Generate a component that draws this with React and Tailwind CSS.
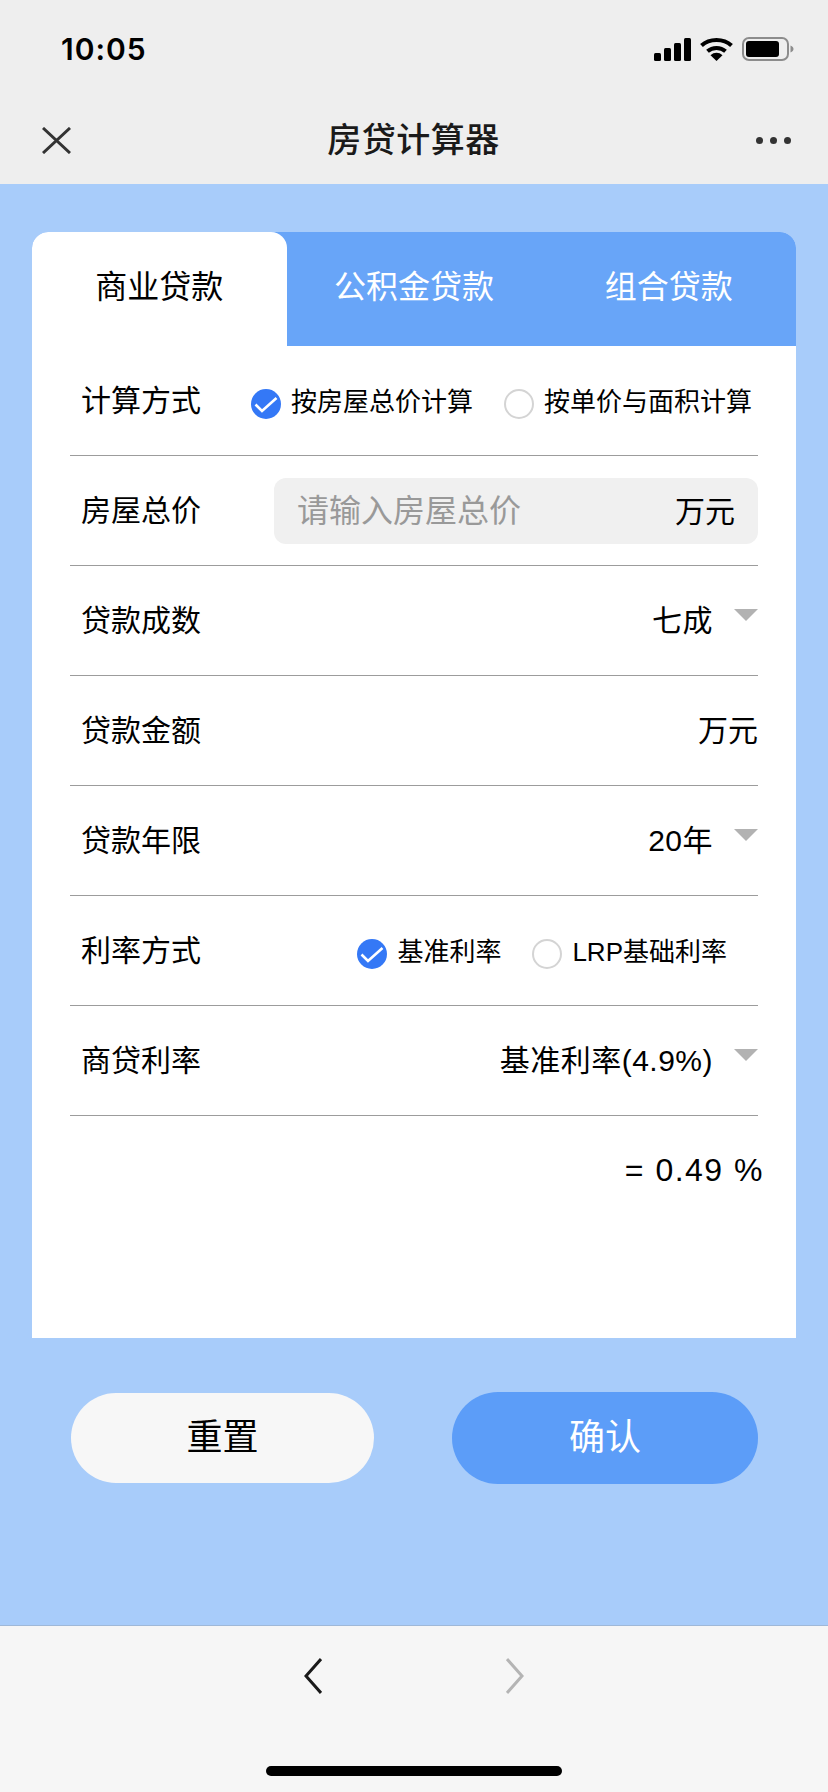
const font = { fontFamily: '"Liberation Sans", "Noto Sans CJK SC", sans-serif' };

const Radio = ({ checked, label }) => (
  <div className="flex items-center gap-[10px]">
    {checked ? (
      <svg width="30" height="30" viewBox="0 0 30 30" className="mt-[4px]">
        <circle cx="15" cy="15" r="15" fill="#3478f6" />
        <path d="M4.5 15.5L11 22 25.5 9" fill="none" stroke="#fff" strokeWidth="2.6" />
      </svg>
    ) : (
      <span className="w-[30px] h-[30px] mt-[4px] rounded-full border-2 border-[#d4d4d4] bg-white" />
    )}
    <span className="text-[26px] leading-[30px] text-black">{label}</span>
  </div>
);

const Arrow = () => (
  <svg width="24" height="12" viewBox="0 0 24 12" className="ml-[21px] mb-3">
    <path d="M0 0h24L12 12z" fill="#b2b2b2" />
  </svg>
);

const Row = ({ label, children }) => (
  <div className="h-[110px] mx-[38px] border-b border-[#9c9c9c] flex items-center justify-between pl-[11px]">
    <span className="text-[30px] leading-[40px] text-black">{label}</span>
    {children}
  </div>
);

const Select = ({ value }) => (
  <div className="flex items-center">
    <span className="text-[30px] leading-[40px] text-black tracking-[0.5px]">{value}</span>
    <Arrow />
  </div>
);

export default function App() {
  return (
    <div className="w-[828px] h-[1792px] flex flex-col bg-[#a8ccfa]" style={font}>
      {/* status + nav */}
      <div className="bg-[#eeeeee] h-[184px] shrink-0">
        <div className="h-[88px] flex items-center justify-between pl-[61px] pr-[34px] pt-[10px]">
          <span className="text-[30px] leading-[36px] font-semibold text-black tracking-[1px]" style={{ fontFamily: 'Inter, sans-serif' }}>10:05</span>
          <div className="flex items-center gap-[9px]">
            <svg width="37" height="23" viewBox="0 0 37 23">
              <rect x="0" y="15" width="7" height="8" rx="1.5" />
              <rect x="10" y="10" width="7" height="13" rx="1.5" />
              <rect x="20" y="5" width="7" height="18" rx="1.5" />
              <rect x="30" y="0" width="7" height="23" rx="1.5" />
            </svg>
            <svg width="33" height="24" viewBox="0 0 33 24">
              <path d="M1.5 8.5C9.5 1 23.5 1 31.5 8.5" fill="none" stroke="#000" strokeWidth="4" />
              <path d="M7.5 14.2C12.5 9.8 20.5 9.8 25.5 14.2" fill="none" stroke="#000" strokeWidth="4" />
              <path d="M10.5 18.3C14 15 19 15 22.5 18.3L16.5 24z" />
            </svg>
            <svg width="52" height="24" viewBox="0 0 52 24">
              <rect x="1" y="1" width="45" height="22" rx="6" fill="none" stroke="#8c8c8c" strokeWidth="2" />
              <rect x="4" y="4" width="33" height="16" rx="3" />
              <path d="M48.5 8.5c2 .8 3 2 3 3.5s-1 2.7-3 3.5z" fill="#8c8c8c" />
            </svg>
          </div>
        </div>
        <div className="h-[96px] flex items-center justify-between pl-[42px] pr-[37px] pt-[8px]">
          <svg width="29" height="27" viewBox="0 0 29 27">
            <path d="M1 1l27 25M28 1L1 26" fill="none" stroke="#333" strokeWidth="3" />
          </svg>
          <span className="text-[34px] leading-[44px] font-medium text-[#1a1a1a] tracking-[0.5px]">房贷计算器</span>
          <div className="flex gap-[7px]">
            <span className="w-[7px] h-[7px] rounded-full bg-[#333]" />
            <span className="w-[7px] h-[7px] rounded-full bg-[#333]" />
            <span className="w-[7px] h-[7px] rounded-full bg-[#333]" />
          </div>
        </div>
      </div>

      {/* main */}
      <div className="flex-1 px-[32px] pt-[48px]">
        <div className="bg-white h-[1106px] rounded-t-[16px] overflow-hidden">
          <div className="grid grid-cols-3 h-[114px] bg-[#68a5f8] text-[32px] text-white">
            <div className="bg-white text-black rounded-t-[16px] flex items-center justify-center pb-[5px]">商业贷款</div>
            <div className="flex items-center justify-center pb-[5px]">公积金贷款</div>
            <div className="flex items-center justify-center pb-[5px]">组合贷款</div>
          </div>

          <Row label="计算方式">
            <div className="flex items-center gap-[31px] pr-[6px] mt-[3px]">
              <Radio checked label="按房屋总价计算" />
              <Radio label="按单价与面积计算" />
            </div>
          </Row>
          <Row label="房屋总价">
            <div className="w-[484px] h-[66px] mt-[1px] rounded-[12px] bg-[#f0f0f0] flex items-center justify-between pl-[23px] pr-[23px]">
              <span className="text-[32px] text-[#999999]">请输入房屋总价</span>
              <span className="text-[30px] text-black">万元</span>
            </div>
          </Row>
          <Row label="贷款成数"><Select value="七成" /></Row>
          <Row label="贷款金额"><span className="text-[30px] leading-[40px] text-black">万元</span></Row>
          <Row label="贷款年限"><Select value="20年" /></Row>
          <Row label="利率方式">
            <div className="flex items-center gap-[31px] pr-[31px] mt-[3px]">
              <Radio checked label="基准利率" />
              <Radio label="LRP基础利率" />
            </div>
          </Row>
          <Row label="商贷利率"><Select value="基准利率(4.9%)" /></Row>

          <div className="flex justify-end pr-[32px] pt-[34px] text-[32px] leading-[40px] text-black tracking-[1.5px]">
            <span className="whitespace-pre">= 0.49 %</span>
          </div>
        </div>

        <div className="flex items-center justify-between pl-[39px] pr-[38px] mt-[54px]">
          <button className="w-[303px] h-[90px] rounded-[45px] bg-[#f7f7f7] text-[36px] text-black">重置</button>
          <button className="w-[306px] h-[92px] rounded-[46px] bg-[#5c9df8] text-[36px] text-white">确认</button>
        </div>
      </div>

      {/* bottom bar */}
      <div className="h-[167px] shrink-0 bg-[#f6f6f6] border-t border-[#9fb8d8] flex flex-col items-center">
        <div className="flex gap-[184px] mt-[32px]">
          <svg width="18" height="36" viewBox="0 0 18 36">
            <path d="M17 1L2 18l15 17" fill="none" stroke="#1a1a1a" strokeWidth="3" />
          </svg>
          <svg width="18" height="36" viewBox="0 0 18 36">
            <path d="M1 1l15 17L1 35" fill="none" stroke="#b4b4b4" strokeWidth="3" />
          </svg>
        </div>
        <div className="w-[296px] h-[10px] rounded-full bg-black mt-[72px]" />
      </div>
    </div>
  );
}
